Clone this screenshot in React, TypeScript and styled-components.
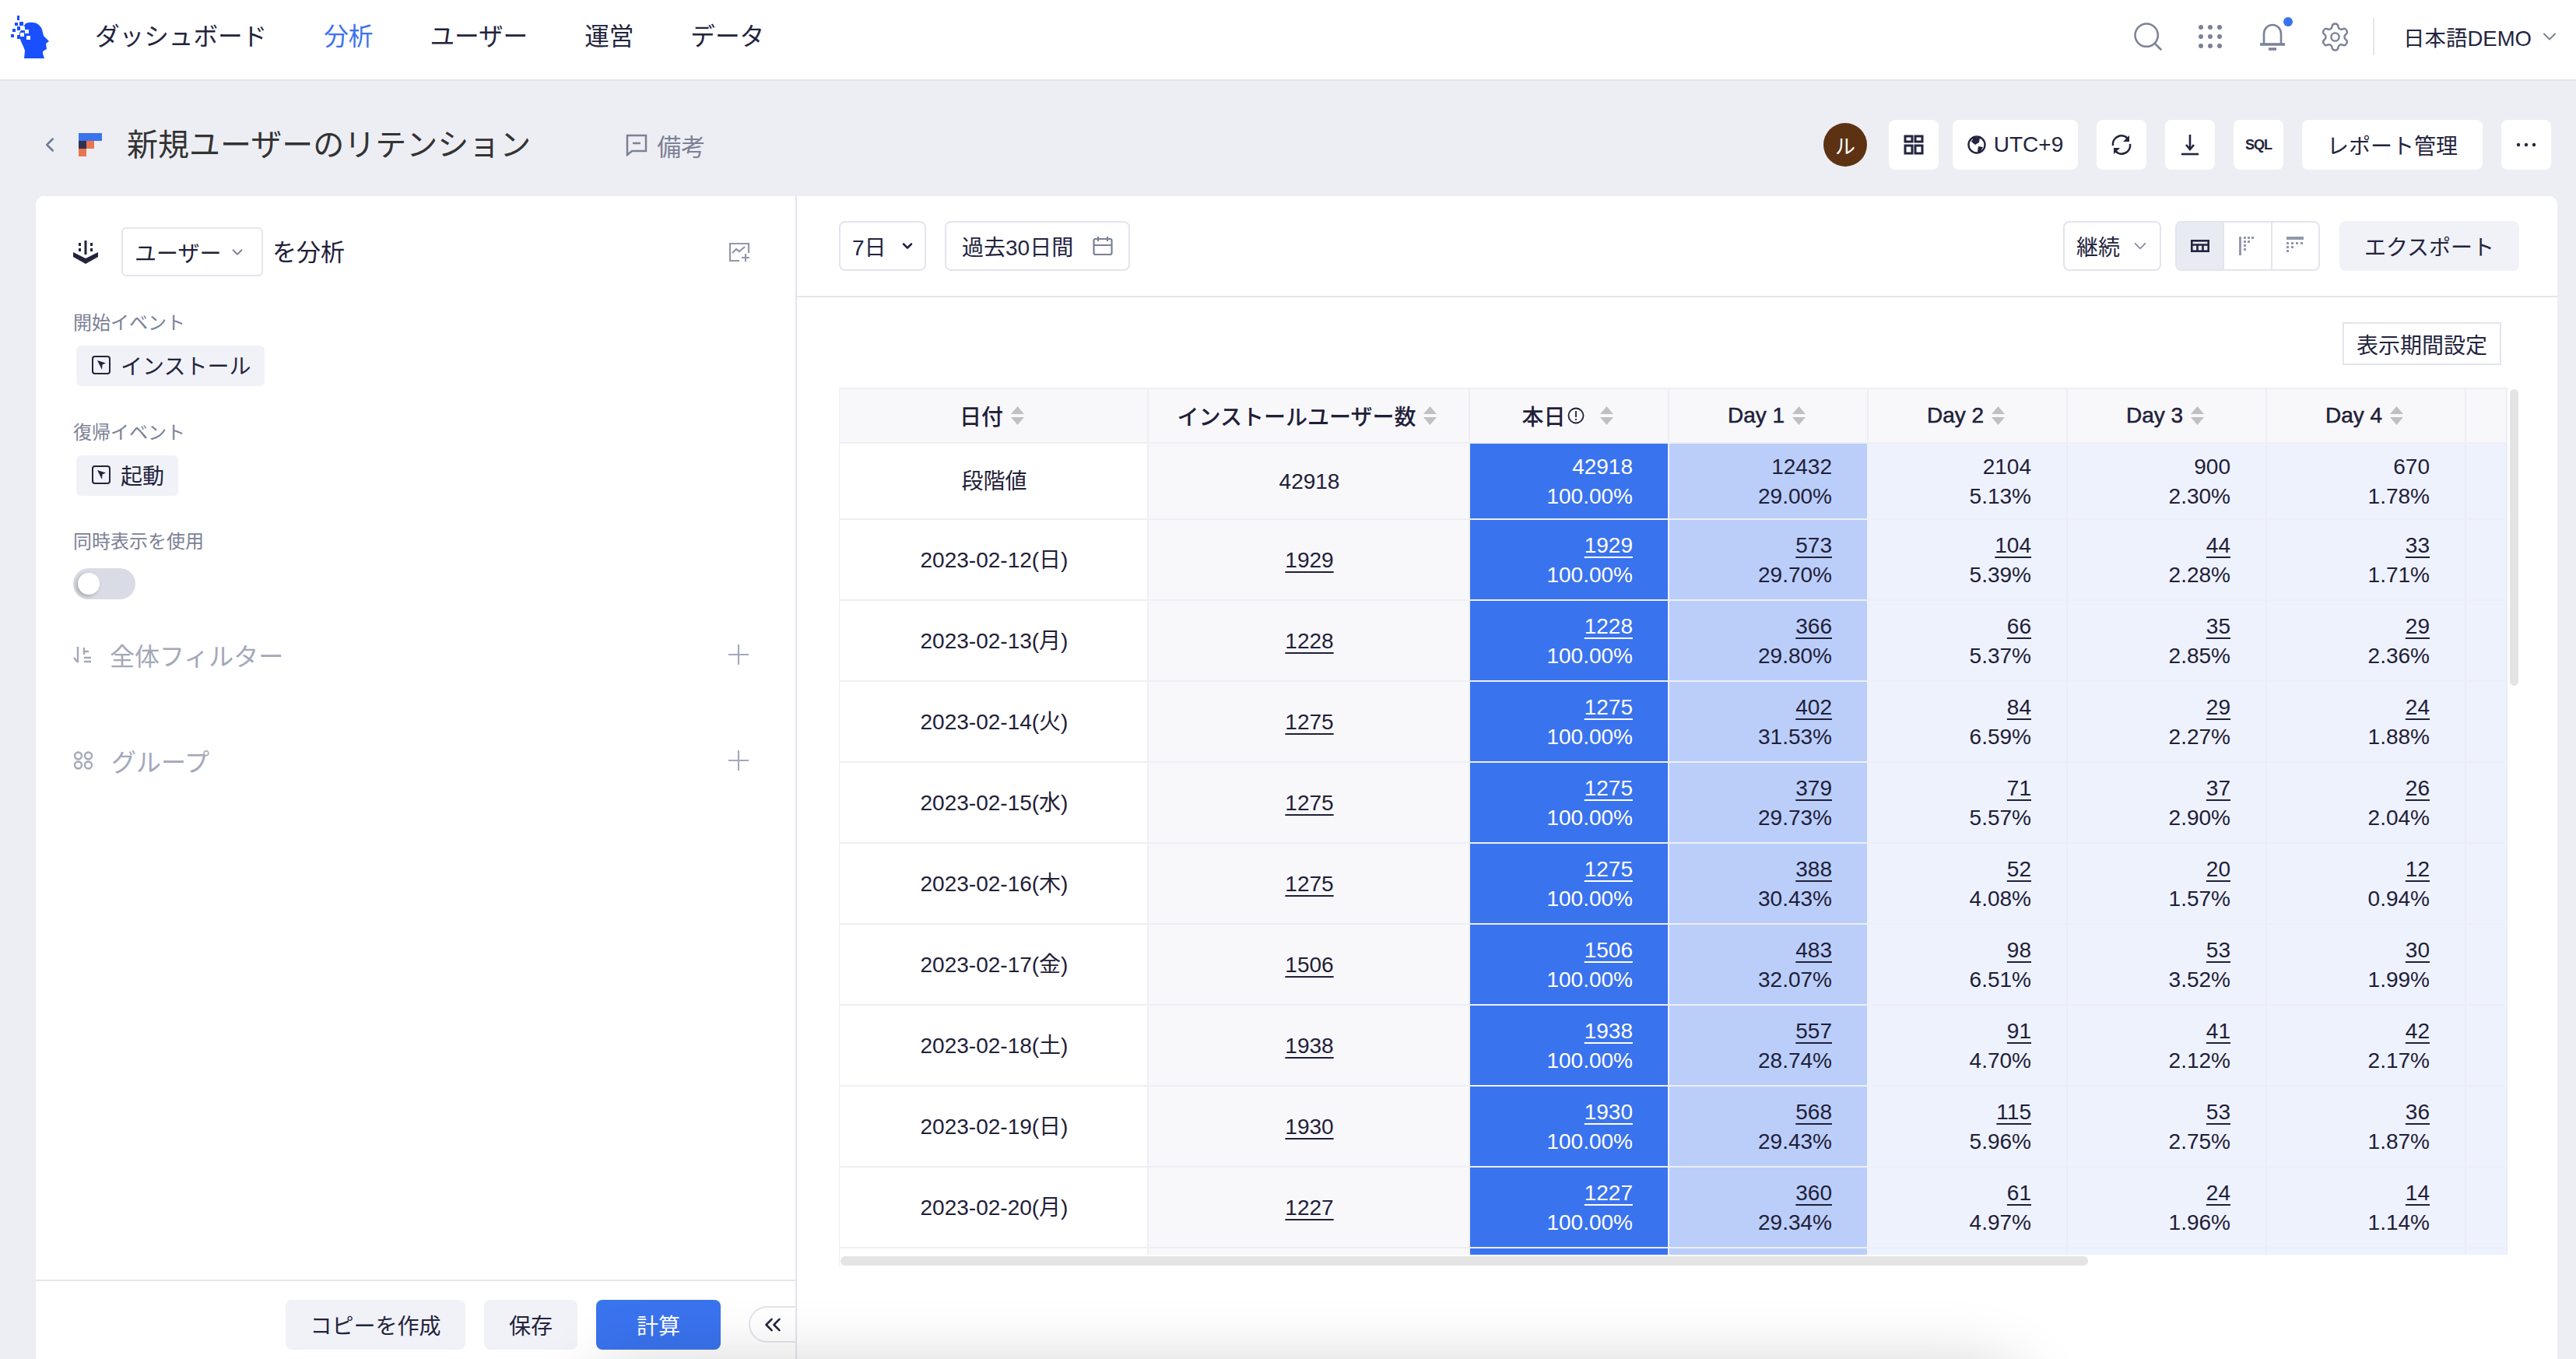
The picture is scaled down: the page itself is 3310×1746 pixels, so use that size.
import React from "react";
import styled, { createGlobalStyle } from "styled-components";
import { ChevronDown, ChevronLeft, ChevronsLeft, Plus, Settings, Search } from "lucide-react";

const FONT = `"Liberation Sans", "Noto Sans CJK JP", sans-serif`;

const Global = createGlobalStyle`
  html, body { margin: 0; padding: 0; background: #edeef3; }
  * { box-sizing: border-box; }
  body { font-family: ${FONT}; color: #1f2038; }
`;

const Page = styled.div`
  position: relative; width: 3310px; height: 1746px; overflow: hidden;
  display: flex; flex-direction: column; background: #edeef3;
`;
const TopNav = styled.header`
  height: 104px; flex: none; background: #fff; border-bottom: 2px solid #e3e5ec;
  display: flex; align-items: center; padding: 0 20px 8px 13px;
`;
const NavList = styled.nav`
  display: flex; gap: 73px; margin-left: 59px; flex: 1;
`;
const NavLink = styled.span<{ $active?: boolean }>`
  font-size: 31.6px; line-height: 44px; color: ${p => (p.$active ? "#3a73ee" : "#23243e")};
`;
const NavTools = styled.div`
  display: flex; align-items: center; color: #7b8196;
`;
const NavIconSlot = styled.span<{ $w: number; $after: number }>`
  position: relative; width: ${p => p.$w}px; height: 36px; margin-right: ${p => p.$after}px;
  display: flex; align-items: center; justify-content: center;
  & > svg { flex: none; }
`;
const NotifyDot = styled.i`
  position: absolute; right: -9px; top: -7px; width: 12px; height: 12px;
  border-radius: 50%; background: #3a73ee;
`;
const NavDivider = styled.span`
  width: 2px; height: 48px; background: #e3e5ec; margin-right: 37px;
`;
const Account = styled.span`
  display: flex; align-items: center; gap: 9px; font-size: 27.500px; color: #23243e;
`;
const TitleBar = styled.div`
  height: 148px; flex: none; display: flex; align-items: center; padding: 16px 32px 0 57px;
`;
const BackButton = styled.span`
  display: flex; color: #6f7a9b; width: 52px; margin-left: -8px;
`;
const Title = styled.h1`
  margin: 0 0 0 32px; font-size: 40px; font-weight: 400; color: #333; line-height: 56px;
`;
const NoteLink = styled.span`
  display: flex; align-items: center; gap: 12px; margin-left: 122px; flex: 1;
  font-size: 31px; color: #7b8196;
`;
const Avatar = styled.span`
  width: 56px; height: 56px; border-radius: 50%; background: #5c3213; color: #fff;
  display: flex; align-items: center; justify-content: center; font-size: 26px;
  margin-right: 28px; flex: none;
`;
const HeadButton = styled.button<{ $gap?: number; $wide?: number }>`
  height: 64px; min-width: 64px; width: ${p => (p.$wide ? `${p.$wide}px` : "64px")};
  margin-right: ${p => p.$gap ?? 24}px; border: 0; border-radius: 8px; background: #fff;
  padding: 0; display: flex; align-items: center; justify-content: center; gap: 10px;
  font: 400 28px ${FONT}; color: #23243e;
  &:last-child { margin-right: 0; }
`;
const SqlMark = styled.span`
  font-size: 18px; font-weight: 700; letter-spacing: -1px; color: #23243e;
`;
const Workspace = styled.main`
  flex: 1; min-height: 0; display: flex; margin: 0 24px 0 46px; background: #fff;
  border-radius: 10px 10px 0 0; overflow: hidden;
`;
const SidePanel = styled.aside`
  width: 978px; flex: none; display: flex; flex-direction: column;
  border-right: 2px solid #e3e5ec;
`;
const SideBody = styled.div`
  flex: 1; padding: 40px 58px 0 48px;
`;
const AnalyzeRow = styled.div`
  display: flex; align-items: center; height: 63px; font-size: 31px; color: #1f2038;
`;
const AnalyzeWord = styled.span`
  margin-left: -4px; padding-bottom: 4px;
`;
const AnalyzeSelect = styled.span`
  width: 182px; height: 63px; margin: 0 16px 0 30px; border: 2px solid #e3e5ec; border-radius: 6px;
  display: flex; align-items: center; justify-content: space-between; padding: 0 20px 0 15px;
  font-size: 28px; color: #1f2038;
`;
const Spacer = styled.span`flex: 1;`;
const FieldLabel = styled.div<{ $top: number }>`
  margin-top: ${p => p.$top}px; font-size: 24px; line-height: 32px; color: #7b8196;
`;
const EventTag = styled.span`
  margin: 13px 0 0 4px; height: 52px; width: fit-content; background: #f1f2f8; border-radius: 6px;
  display: flex; align-items: center; gap: 13px; padding: 0 18px 2px 20px;
  font-size: 28px; color: #23243e;
`;
const Switch = styled.span`
  display: block; position: relative; width: 80px; height: 40px; margin-top: 18px;
  border-radius: 20px; background: #d9dce4;
  &::after {
    content: ""; position: absolute; left: 6px; top: 6px; width: 28px; height: 28px;
    border-radius: 50%; background: #fff; box-shadow: -2px 2px 5px rgba(0,0,0,.25);
  }
`;
const CollapsedRow = styled.div<{ $top: number }>`
  display: flex; align-items: center; height: 44px; margin-top: ${p => p.$top}px;
  font-size: 32px; color: #a3a8ba;
  & > svg:last-child { flex: none; margin-right: -6px; }
`;
const RowText = styled.span`
  margin-left: 23px; flex: 1;
`;
const SideFooter = styled.footer`
  height: 102px; flex: none; border-top: 2px solid #e3e5ec; padding-top: 24px;
  display: flex; justify-content: flex-end; align-items: flex-start; gap: 24px;
`;
const FootButton = styled.button<{ $primary?: boolean; $w: number }>`
  width: ${p => p.$w}px; height: 64px; border: 0; border-radius: 8px;
  background: ${p => (p.$primary ? "#3a73ee" : "#f1f2f8")};
  color: ${p => (p.$primary ? "#fff" : "#23243e")};
  font: 400 28px ${FONT};
`;
const CollapseButton = styled.button`
  width: 60px; height: 47px; margin: 8px 0 0 12px; border: 2px solid #e3e5ec; border-right: 0;
  border-radius: 24px 0 0 24px; background: #fff; color: #23243e; padding: 0;
  display: flex; align-items: center; justify-content: center;
`;
const MainPanel = styled.section`
  flex: 1; min-width: 0; display: flex; flex-direction: column;
`;
const MainToolbar = styled.div`
  height: 130px; flex: none; border-bottom: 2px solid #e3e5ec; padding: 32px 49px 0 54px;
  display: flex; align-items: flex-start;
`;
const OutlineSelect = styled.span<{ $w: number; $gap?: number; $roomy?: boolean }>`
  width: ${p => p.$w}px; height: 64px; margin-right: ${p => p.$gap ?? 0}px;
  border: 2px solid #e3e5ec; border-radius: 8px;
  display: flex; align-items: center; justify-content: space-between;
  padding: ${p => (p.$roomy ? "0 20px" : "0 12px 0 15px")};
  font-size: 28px; color: #23243e;
`;
const Segment = styled.div`
  display: flex; width: 186px; height: 64px; margin: 0 25px 0 18px;
  border: 2px solid #e3e5ec; border-radius: 8px; overflow: hidden;
`;
const SegmentItem = styled.span<{ $on?: boolean }>`
  flex: 1; display: flex; align-items: center; justify-content: center;
  background: ${p => (p.$on ? "#e9ebf2" : "#fff")};
  & + & { border-left: 2px solid #e3e5ec; }
`;
const ExportButton = styled.button`
  width: 231px; height: 64px; border: 0; border-radius: 8px; background: #f1f2f8;
  font: 400 28px ${FONT}; color: #23243e;
`;
const MainContent = styled.div`
  flex: 1; min-height: 0; padding: 32px 0 0 54px; display: flex; flex-direction: column;
`;
const PeriodButton = styled.button`
  align-self: flex-end; width: 204px; height: 55px; margin: 0 72px 29px 0;
  border: 2px solid #e3e5ec; background: #fff; padding: 0;
  font: 400 28px ${FONT}; color: #23243e;
`;
const TableFrame = styled.div`
  position: relative; width: 2144px; height: 1130px;
  border-left: 1px solid #eeeef4;
`;
const TableClip = styled.div`
  height: 1114px; overflow: hidden; border-top: 2px solid #eeeef4;
`;
const Row = styled.div<{ $h: number }>`
  display: grid; grid-template-columns: 397px 413px 256px 256px 256px 256px 256px 53px;
  height: ${p => p.$h}px; border-bottom: 2px solid #eeeef4;
`;
const HeadCell = styled.div`
  display: flex; align-items: center; justify-content: center; gap: 10px;
  background: #f8f8fb; border-right: 2px solid #eeeef4; padding-right: 4px;
  font-size: 28px; font-weight: 500; color: #1f2038;
`;
const DayLabel = styled.span`
  -webkit-text-stroke: 0.5px #1f2038;
`;
const TodayLabel = styled.span`
  display: flex; align-items: center; gap: 2px; margin-right: 10px;
`;
const LabelCell = styled.div<{ $soft?: boolean }>`
  display: flex; align-items: center; justify-content: center; padding: 1px 0 0 2px;
  background: ${p => (p.$soft ? "#f8f8fb" : "#fff")}; border-right: 2px solid #eeeef4;
  font-size: 28px; line-height: 38px; color: #1f2038;
`;
const toneBg = { strong: "#3a73ee", mid: "#bbcefa", soft: "#eef2fd" };
const MetricCell = styled.div<{ $tone: "strong" | "mid" | "soft" }>`
  display: flex; flex-direction: column; justify-content: center; align-items: flex-end;
  padding: 2px 45px 0 0; font-size: 28px; line-height: 38px;
  background: ${p => toneBg[p.$tone]};
  color: ${p => (p.$tone === "strong" ? "#fff" : "#1f2038")};
  border-right: 2px solid ${p => (p.$tone === "soft" ? "#e9ecf8" : "#eef2fd")};
`;
const Num = styled.span<{ $link?: boolean }>`
  text-decoration: ${p => (p.$link ? "underline" : "none")};
  text-decoration-thickness: 2px; text-underline-offset: 5px;
`;
const ScrollY = styled.div`
  position: absolute; left: 2146px; top: 2px; width: 11px; height: 381px;
  border-radius: 6px; background: #e4e4e4;
`;
const ScrollX = styled.div`
  position: absolute; left: 1px; top: 1116px; width: 1603px; height: 12px;
  border-radius: 6px; background: #e4e4e4;
`;
const BottomShade = styled.div`
  position: absolute; left: 780px; top: 1778px; width: 1800px; height: 80px;
  border-radius: 40px; box-shadow: 0 0 90px 20px rgba(0,0,0,.2); pointer-events: none;
`;

const Logo = () => (
  <svg width="50" height="55" viewBox="0 0 50 55">
    <path fill="#1a4fff" d="M20 10C30 7 38 10 41 18L43 26L50 33L46 36L47 43L42 46L42 49L44 55H18L19 45C17 38 11 30 12 22Z" />
    <path fill="#fff" d="M14 14h5v5h-5zM19 18h5v5h-5zM13 22h5v5h-5zM21 26h5v5h-5z" />
    <path fill="#1a4fff" d="M9 0h3v6H9zM12 8h5v5h-5zM6 9h4v4H6zM9 14h4v5H9zM3 17h4v4H3zM1 24h4v4H1zM9 25h4v5H9zM14 19h5v3h-5z" />
  </svg>
);
const GridDots = () => (
  <svg width="30" height="30" viewBox="0 0 30 30" fill="#7b8196">
    {[3, 15, 27].flatMap(y => [3, 15, 27].map(x => <circle key={`${x}-${y}`} cx={x} cy={y} r="3" />))}
  </svg>
);
const Bell = () => (
  <svg width="34" height="36" viewBox="0 0 34 36" fill="none" stroke="#7b8196" strokeWidth="2.6">
    <path d="M6 27V15C6 8 10.500 3 17 3S28 8 28 15V27" />
    <path d="M1 28H33" strokeWidth="3.500" />
    <path d="M12 34H22" strokeWidth="3.500" />
  </svg>
);
const ReportLogo = () => (
  <svg width="30" height="30" viewBox="0 0 30 30">
    <rect x="0" y="0" width="30" height="10" fill="#3a73ee" />
    <rect x="0" y="10" width="10" height="10" fill="#2f3150" />
    <rect x="10" y="10" width="10" height="10" fill="#e8754f" />
    <rect x="0" y="20" width="10" height="10" fill="#e8754f" />
  </svg>
);
const NoteIcon = () => (
  <svg width="28" height="30" viewBox="0 0 28 30" fill="none" stroke="#7b8196" strokeWidth="2.500">
    <path d="M2 3H26V23H8L2 28Z" /><path d="M9 13H19" />
  </svg>
);
const Dashboard = () => (
  <svg width="26" height="26" viewBox="0 0 26 26" fill="none" stroke="#23243e" strokeWidth="3">
    <rect x="2" y="2" width="9" height="7" /><rect x="15" y="2" width="9" height="7" />
    <rect x="2" y="14" width="9" height="10" /><rect x="15" y="14" width="9" height="10" />
  </svg>
);
const Globe = () => (
  <svg width="24" height="24" viewBox="0 0 24 24">
    <circle cx="12" cy="12" r="10.500" fill="none" stroke="#23243e" strokeWidth="2.400" />
    <path fill="#23243e" d="M8 3L16 3L15 9L10 12L5 8ZM14 14L20 15L16 22L13 21Z" />
  </svg>
);
const Refresh = () => (
  <svg width="28" height="28" viewBox="0 0 28 28" fill="none" stroke="#23243e" strokeWidth="2.600">
    <path d="M3 15A11 11 0 0 1 22 6" /><path d="M25 13A11 11 0 0 1 6 22" />
    <path fill="#23243e" stroke="none" d="M24 2V10H16ZM4 26V18H12Z" />
  </svg>
);
const Download = () => (
  <svg width="24" height="28" viewBox="0 0 24 28" fill="none" stroke="#23243e" strokeWidth="2.600">
    <path d="M12 1V19" /><path d="M7 14L12 20L17 14" /><path d="M1 26H23" />
  </svg>
);
const Dots = () => (
  <svg width="26" height="6" viewBox="0 0 26 6" fill="#23243e">
    <circle cx="3" cy="3" r="2.200" /><circle cx="13" cy="3" r="2.200" /><circle cx="23" cy="3" r="2.200" />
  </svg>
);
const Anchor = () => (
  <svg width="32" height="30" viewBox="0 0 32 30" fill="#23243e">
    <path d="M14.500 0h3v18h-3zM7 3h3v4H7zM22 3h3v4h-3zM7 10h3v4H7zM22 10h3v4h-3z" />
    <path d="M0 15L16 23L32 15V21L16 30L0 21Z" />
  </svg>
);
const ChartAdd = () => (
  <svg width="28" height="26" viewBox="0 0 28 26" fill="none" stroke="#9298ac" strokeWidth="2.200">
    <path d="M14 24H2V2H26V14" /><path d="M5 14L10 9L14 12L21 6" /><path d="M22 15V25M17 20H27" />
  </svg>
);
const EventIcon = () => (
  <svg width="24" height="24" viewBox="0 0 24 24">
    <rect x="1" y="1" width="22" height="22" rx="3" fill="none" stroke="#23243e" strokeWidth="2" />
    <path fill="#23243e" d="M7 6L18 9.500L13.500 11.500L13 18Z" />
  </svg>
);
const FilterIcon = () => (
  <svg width="24" height="24" viewBox="0 0 24 24" fill="none" stroke="#a3a8ba" strokeWidth="2.400">
    <path d="M6 2V22M1 16L6 22" /><path d="M14 3V12M14 16H23M14 21H23M14 8H20" />
  </svg>
);
const GroupIcon = () => (
  <svg width="26" height="24" viewBox="0 0 26 24" fill="none" stroke="#a3a8ba" strokeWidth="2.400">
    <circle cx="6.500" cy="6" r="4.500" /><circle cx="19.500" cy="6" r="4.500" />
    <circle cx="6.500" cy="18" r="4.500" /><circle cx="19.500" cy="18" r="4.500" />
  </svg>
);
const CalendarIcon = () => (
  <svg width="26" height="26" viewBox="0 0 26 26" fill="none" stroke="#7b8196" strokeWidth="2.200">
    <rect x="1.500" y="4" width="23" height="20" rx="2" /><path d="M1.500 12H24.500M7 1V7M19 1V7" />
  </svg>
);
const TableIcon = () => (
  <svg width="24" height="16" viewBox="0 0 24 16" fill="none" stroke="#23243e" strokeWidth="2.600">
    <rect x="1.300" y="1.300" width="21.400" height="13.400" /><path d="M1.300 6.500H22.700M8.500 6.500V15M15.500 6.500V15" />
  </svg>
);
const StepLeft = () => (
  <svg width="22" height="24" viewBox="0 0 22 24" fill="#9298ac">
    <rect x="0" y="0" width="3" height="24" />
    {[[6, 0], [11, 0], [16, 0], [6, 5], [11, 5], [6, 10]].map(([x, y]) => <rect key={`${x}${y}`} x={x} y={y} width="3" height="3" />)}
    <rect x="6" y="15" width="3" height="3" />
  </svg>
);
const StepTop = () => (
  <svg width="22" height="24" viewBox="0 0 22 24" fill="#9298ac">
    <rect x="0" y="0" width="22" height="4" />
    {[[0, 7], [6, 7], [12, 7], [18, 7], [0, 12], [6, 12], [0, 17]].map(([x, y]) => <rect key={`${x}${y}`} x={x} y={y} width="3" height="3" />)}
  </svg>
);
const Sort = () => (
  <svg width="17" height="24" viewBox="0 0 17 24" fill="#c0c0c0">
    <path d="M8.500 0L17 10H0ZM0 14H17L8.500 24Z" />
  </svg>
);
const InfoIcon = () => (
  <svg width="22" height="22" viewBox="0 0 22 22" fill="none" stroke="#1f2038" strokeWidth="1.800">
    <circle cx="11" cy="11" r="9.500" /><path d="M11 5V13M11 15V17" />
  </svg>
);

type Metric = [string, string];
type Rec = { label: string; total: string; metrics: Metric[]; link: boolean };
const mk = (label: string, total: string, ...m: string[]): Rec => ({
  label, total, link: true,
  metrics: [[total, "100.00%"], [m[0], m[1]], [m[2], m[3]], [m[4], m[5]], [m[6], m[7]]],
});
const rows: Rec[] = [
  { ...mk("段階値", "42918", "12432", "29.00%", "2104", "5.13%", "900", "2.30%", "670", "1.78%"), link: false },
  mk("2023-02-12(日)", "1929", "573", "29.70%", "104", "5.39%", "44", "2.28%", "33", "1.71%"),
  mk("2023-02-13(月)", "1228", "366", "29.80%", "66", "5.37%", "35", "2.85%", "29", "2.36%"),
  mk("2023-02-14(火)", "1275", "402", "31.53%", "84", "6.59%", "29", "2.27%", "24", "1.88%"),
  mk("2023-02-15(水)", "1275", "379", "29.73%", "71", "5.57%", "37", "2.90%", "26", "2.04%"),
  mk("2023-02-16(木)", "1275", "388", "30.43%", "52", "4.08%", "20", "1.57%", "12", "0.94%"),
  mk("2023-02-17(金)", "1506", "483", "32.07%", "98", "6.51%", "53", "3.52%", "30", "1.99%"),
  mk("2023-02-18(土)", "1938", "557", "28.74%", "91", "4.70%", "41", "2.12%", "42", "2.17%"),
  mk("2023-02-19(日)", "1930", "568", "29.43%", "115", "5.96%", "53", "2.75%", "36", "1.87%"),
  mk("2023-02-20(月)", "1227", "360", "29.34%", "61", "4.97%", "24", "1.96%", "14", "1.14%"),
];
const tones: ("strong" | "mid" | "soft")[] = ["strong", "mid", "soft", "soft", "soft"];

export default function App() {
  return (
    <Page>
      <Global />
      <TopNav>
        <Logo />
        <NavList>
          <NavLink>ダッシュボード</NavLink>
          <NavLink $active>分析</NavLink>
          <NavLink>ユーザー</NavLink>
          <NavLink>運営</NavLink>
          <NavLink>データ</NavLink>
        </NavList>
        <NavTools>
          <NavIconSlot $w={34} $after={48}><Search size={44} strokeWidth={1.400} /></NavIconSlot>
          <NavIconSlot $w={30} $after={48}><GridDots /></NavIconSlot>
          <NavIconSlot $w={34} $after={46}><Bell /><NotifyDot /></NavIconSlot>
          <NavIconSlot $w={34} $after={32}><Settings size={41} strokeWidth={1.400} /></NavIconSlot>
          <NavDivider />
          <Account>日本語DEMO<ChevronDown size={28} strokeWidth={1.700} color="#7b8196" /></Account>
        </NavTools>
      </TopNav>
      <TitleBar>
        <BackButton><ChevronLeft size={30} strokeWidth={2} /></BackButton>
        <ReportLogo />
        <Title>新規ユーザーのリテンション</Title>
        <NoteLink><NoteIcon />備考</NoteLink>
        <Avatar>ル</Avatar>
        <HeadButton $gap={18}><Dashboard /></HeadButton>
        <HeadButton $wide={161}><Globe />UTC+9</HeadButton>
        <HeadButton><Refresh /></HeadButton>
        <HeadButton><Download /></HeadButton>
        <HeadButton><SqlMark>SQL</SqlMark></HeadButton>
        <HeadButton $wide={232}>レポート管理</HeadButton>
        <HeadButton><Dots /></HeadButton>
      </TitleBar>
      <Workspace>
        <SidePanel>
          <SideBody>
            <AnalyzeRow>
              <Anchor />
              <AnalyzeSelect>ユーザー<ChevronDown size={22} color="#7b8196" /></AnalyzeSelect>
              <AnalyzeWord>を分析</AnalyzeWord>
              <Spacer />
              <ChartAdd />
            </AnalyzeRow>
            <FieldLabel $top={44}>開始イベント</FieldLabel>
            <EventTag><EventIcon />インストール</EventTag>
            <FieldLabel $top={44}>復帰イベント</FieldLabel>
            <EventTag><EventIcon />起動</EventTag>
            <FieldLabel $top={43}>同時表示を使用</FieldLabel>
            <Switch />
            <CollapsedRow $top={49}><FilterIcon /><RowText>全体フィルター</RowText><Plus size={42} strokeWidth={1.200} /></CollapsedRow>
            <CollapsedRow $top={92}><GroupIcon /><RowText>グループ</RowText><Plus size={42} strokeWidth={1.200} /></CollapsedRow>
          </SideBody>
          <SideFooter>
            <FootButton $w={231}>コピーを作成</FootButton>
            <FootButton $w={120}>保存</FootButton>
            <FootButton $w={160} $primary>計算</FootButton>
            <CollapseButton><ChevronsLeft size={34} strokeWidth={1.800} /></CollapseButton>
          </SideFooter>
        </SidePanel>
        <MainPanel>
          <MainToolbar>
            <OutlineSelect $w={112} $gap={24}>7日<ChevronDown size={20} strokeWidth={3} /></OutlineSelect>
            <OutlineSelect $w={238} $roomy>過去30日間<CalendarIcon /></OutlineSelect>
            <Spacer />
            <OutlineSelect $w={126}>継続<ChevronDown size={26} strokeWidth={1.600} color="#7b8196" /></OutlineSelect>
            <Segment>
              <SegmentItem $on><TableIcon /></SegmentItem>
              <SegmentItem><StepLeft /></SegmentItem>
              <SegmentItem><StepTop /></SegmentItem>
            </Segment>
            <ExportButton>エクスポート</ExportButton>
          </MainToolbar>
          <MainContent>
            <PeriodButton>表示期間設定</PeriodButton>
            <TableFrame>
              <TableClip>
                <Row $h={70}>
                  <HeadCell>日付<Sort /></HeadCell>
                  <HeadCell>インストールユーザー数<Sort /></HeadCell>
                  <HeadCell><TodayLabel>本日<InfoIcon /></TodayLabel><Sort /></HeadCell>
                  <HeadCell><DayLabel>Day 1</DayLabel><Sort /></HeadCell>
                  <HeadCell><DayLabel>Day 2</DayLabel><Sort /></HeadCell>
                  <HeadCell><DayLabel>Day 3</DayLabel><Sort /></HeadCell>
                  <HeadCell><DayLabel>Day 4</DayLabel><Sort /></HeadCell>
                  <HeadCell />
                </Row>
                {rows.map((r, i) => (
                  <Row key={r.label} $h={i === 0 ? 98 : 104}>
                    <LabelCell>{r.label}</LabelCell>
                    <LabelCell $soft><Num $link={r.link}>{r.total}</Num></LabelCell>
                    {r.metrics.map((m, j) => (
                      <MetricCell key={j} $tone={tones[j]}>
                        <Num $link={r.link}>{m[0]}</Num>
                        <Num>{m[1]}</Num>
                      </MetricCell>
                    ))}
                    <MetricCell $tone="soft" />
                  </Row>
                ))}
                <Row $h={104}>
                  <LabelCell />
                  <LabelCell $soft />
                  {tones.map((t, j) => <MetricCell key={j} $tone={t} />)}
                  <MetricCell $tone="soft" />
                </Row>
              </TableClip>
              <ScrollY />
              <ScrollX />
            </TableFrame>
          </MainContent>
        </MainPanel>
      </Workspace>
      <BottomShade />
    </Page>
  );
}
